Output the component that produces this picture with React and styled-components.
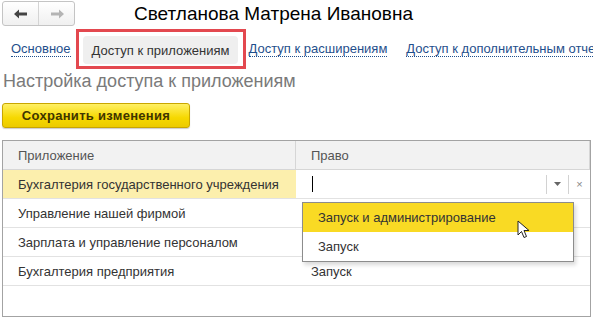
import styled, { createGlobalStyle } from "styled-components";

const GlobalStyle = createGlobalStyle`
  html, body {
    margin: 0;
    padding: 0;
    background: #fff;
  }
  body {
    font-family: "Liberation Sans", Arial, sans-serif;
    color: #333;
    width: 593px;
    height: 321px;
    overflow: hidden;
  }
`;

const Page = styled.div`
  padding: 1px 3px 0 2px;
  display: flex;
  flex-direction: column;
`;

const TopBar = styled.div`
  display: flex;
  align-items: center;
  height: 25px;
`;

const NavGroup = styled.div`
  display: flex;
  width: 71px;
  height: 23px;
  border: 1px solid #c4c4c4;
  border-radius: 3px;
  background: linear-gradient(#ffffff, #f0f0f0);
  box-sizing: content-box;
`;

const NavButton = styled.div`
  flex: 1;
  display: flex;
  align-items: center;
  justify-content: center;
  & + & {
    border-left: 1px solid #d4d4d4;
  }
`;

const Title = styled.h1`
  margin: 0 0 0 59px;
  font-size: 19px;
  font-weight: normal;
  color: #000;
  line-height: 25px;
`;

const Tabs = styled.div`
  display: flex;
  align-items: center;
  margin-top: 3px;
  height: 40px;
  margin-right: -3px;
  overflow: hidden;
`;

const TabLink = styled.span`
  flex-shrink: 0;
  font-size: 13px;
  color: #1f4f8c;
  border-bottom: 1px dotted #1f4f8c;
  line-height: 14px;
  margin-left: ${(p) => p.$gap}px;
  white-space: nowrap;
`;

const Highlight = styled.div`
  flex-shrink: 0;
  margin-left: 5px;
  border: 3px solid #e3484f;
  padding: 4px 5px 1px 4px;
  box-sizing: border-box;
  width: 170px;
  height: 40px;
`;

const ActiveTab = styled.div`
  height: 28px;
  border-radius: 4px;
  background: #efefef;
  font-size: 13px;
  color: #333;
  display: flex;
  align-items: center;
  padding-left: 9px;
  white-space: nowrap;
`;

const Heading = styled.h2`
  margin: 1px 0 0;
  font-size: 18px;
  font-weight: normal;
  color: #7a7a7a;
  line-height: 22px;
  padding-left: 1px;
`;

const SaveButton = styled.button`
  margin-top: 11px;
  width: 188px;
  height: 25px;
  border: 1px solid #c9a600;
  border-radius: 3px;
  background: linear-gradient(#fff064, #f6d800 60%, #eccb00);
  box-shadow: 0 1px 1px rgba(0, 0, 0, 0.2);
  font-family: "Liberation Sans", Arial, sans-serif;
  font-weight: bold;
  font-size: 13px;
  color: #3f3500;
  letter-spacing: 0.3px;
  padding: 0;
`;

const Table = styled.div`
  margin-top: 12px;
  width: 589px;
  height: 177px;
  border: 1px solid #a3a3a3;
  box-sizing: border-box;
  display: flex;
  flex-direction: column;
`;

const Row = styled.div`
  display: grid;
  grid-template-columns: 293px 1fr;
  height: 29px;
  box-sizing: border-box;
  border-bottom: 1px solid ${(p) => (p.$head ? "#d6d6d6" : "#e2e2e2")};
  background: ${(p) => (p.$head ? "#f2f2f2" : "#fff")};
  position: relative;
`;

const Cell = styled.div`
  display: flex;
  align-items: center;
  padding-left: 15px;
  font-size: 13px;
  color: ${(p) => (p.$head ? "#555" : "#333")};
  background: ${(p) => (p.$selected ? "#fcefad" : "transparent")};
  border-right: ${(p) => (p.$head ? "1px solid #d6d6d6" : "none")};
  white-space: nowrap;
`;

const EditCell = styled.div`
  display: flex;
  align-items: center;
  position: relative;
`;

const Caret = styled.div`
  width: 1px;
  height: 16px;
  background: #000;
  margin-left: 16px;
`;

const Spacer = styled.div`
  flex: 1;
`;

const EditButton = styled.div`
  width: 21px;
  height: 19px;
  border-left: 1px solid #d2d2d2;
  display: flex;
  align-items: center;
  justify-content: center;
  color: #888;
  font-size: 11px;
`;

const Popup = styled.div`
  position: absolute;
  left: 6px;
  top: 32px;
  width: 270px;
  border: 1px solid #8c8c8c;
  background: #fff;
  box-shadow: 2px 3px 4px rgba(0, 0, 0, 0.15);
  z-index: 5;
`;

const PopupItem = styled.div`
  height: 29px;
  display: flex;
  align-items: center;
  padding-left: 15px;
  font-size: 13px;
  color: #333;
  background: ${(p) => (p.$active ? "#f9da24" : "#fff")};
`;

const Pointer = styled.svg`
  position: absolute;
  left: 214px;
  top: 17px;
  z-index: 6;
`;

const rows = [
  { app: "Управление нашей фирмой", right: "" },
  { app: "Зарплата и управление персоналом", right: "" },
  { app: "Бухгалтерия предприятия", right: "Запуск" },
];

export default function App() {
  return (
    <>
      <GlobalStyle />
      <Page>
        <TopBar>
          <NavGroup>
            <NavButton>
              <svg width="14" height="10" viewBox="0 0 14 10">
                <path d="M0 5 L5 0.5 L5 3.5 L13 3.5 L13 6.5 L5 6.5 L5 9.5 Z" fill="#444" />
              </svg>
            </NavButton>
            <NavButton>
              <svg width="14" height="10" viewBox="0 0 14 10">
                <path d="M14 5 L9 0.5 L9 3.5 L1 3.5 L1 6.5 L9 6.5 L9 9.5 Z" fill="#b4b4b4" />
              </svg>
            </NavButton>
          </NavGroup>
          <Title>Светланова Матрена Ивановна</Title>
        </TopBar>
        <Tabs>
          <TabLink $gap={9}>Основное</TabLink>
          <Highlight>
            <ActiveTab>Доступ к приложениям</ActiveTab>
          </Highlight>
          <TabLink $gap={3}>Доступ к расширениям</TabLink>
          <TabLink $gap={19}>Доступ к дополнительным отчетам и обработкам</TabLink>
        </Tabs>
        <Heading>Настройка доступа к приложениям</Heading>
        <div>
          <SaveButton>Сохранить изменения</SaveButton>
        </div>
        <Table>
          <Row $head>
            <Cell $head>Приложение</Cell>
            <Cell $head>Право</Cell>
          </Row>
          <Row>
            <Cell $selected>Бухгалтерия государственного учреждения</Cell>
            <EditCell>
              <Caret />
              <Spacer />
              <EditButton>
                <svg width="7" height="4" viewBox="0 0 7 4">
                  <path d="M0 0 L7 0 L3.5 4 Z" fill="#666" />
                </svg>
              </EditButton>
              <EditButton>×</EditButton>
              <Popup>
                <PopupItem $active>Запуск и администрирование</PopupItem>
                <PopupItem>Запуск</PopupItem>
                <Pointer width="14" height="20" viewBox="0 0 14 20">
                  <path
                    d="M1 1 L1 15 L4.5 11.5 L7 17.5 L9.5 16.5 L7 10.5 L12 10.5 Z"
                    fill="#fff"
                    stroke="#222"
                    strokeWidth="1"
                    strokeLinejoin="round"
                  />
                </Pointer>
              </Popup>
            </EditCell>
          </Row>
          {rows.map((r) => (
            <Row key={r.app}>
              <Cell>{r.app}</Cell>
              <Cell>{r.right}</Cell>
            </Row>
          ))}
        </Table>
      </Page>
    </>
  );
}
